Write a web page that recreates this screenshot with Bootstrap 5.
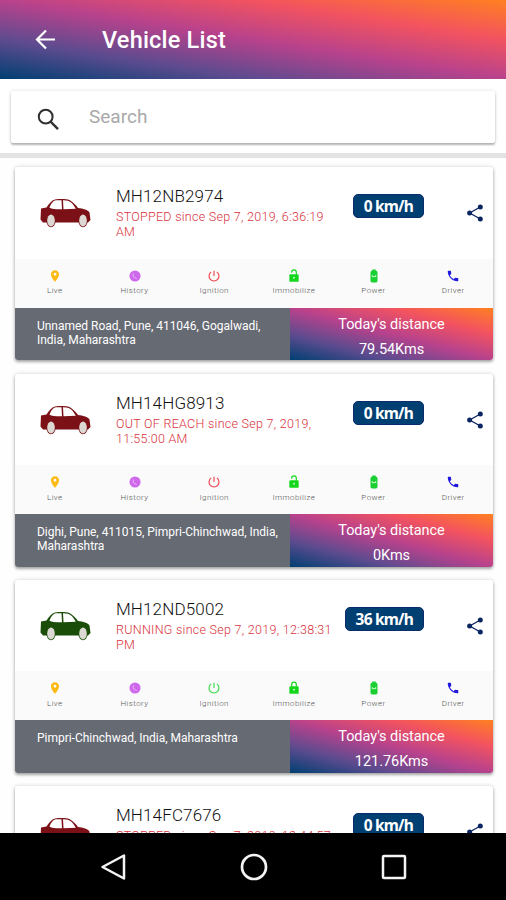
<!DOCTYPE html>
<html lang="en">
<head>
<meta charset="utf-8">
<meta name="viewport" content="width=device-width, initial-scale=1">
<title>Vehicle List</title>
<link rel="stylesheet" href="https://cdn.jsdelivr.net/npm/bootstrap@5.3.0/dist/css/bootstrap.min.css">
<style>
:root{--sunset:linear-gradient(to top right,#003f72,#5d4b8f 25%,#b8428c 50%,#f3535f 75%,#ff8020)}
body{font-family:Roboto,"Liberation Sans",sans-serif;height:900px;overflow:hidden;background:#fff}
.app-header{height:79px;background:var(--sunset);padding:0 35px}
.app-header h1{font-size:23.5px;font-weight:500;margin-left:46px;letter-spacing:.2px;line-height:28px}
.search-area{height:158px;flex:0 0 79px;padding:12px 11px 0;border-bottom:5px solid #e3e3e3}
.search-card{height:52px;border-radius:2px;box-shadow:0 2px 2px rgba(0,0,0,.26),0 0 4px rgba(0,0,0,.13);padding:0 25px}
.search-card input{font-size:19px;margin-left:29px;padding:0;border:0;outline:0;background:none;line-height:24px;height:24px}
.search-card input::placeholder{color:#a9a9a9;opacity:1}
.vehicle-list{padding:9.4px 13px 0 15px;gap:13.2px;background:#fefefe;min-height:0}
.vehicle{flex:0 0 193px;border-radius:3px;overflow:hidden;background:#fff;box-shadow:0 2px 3px rgba(0,0,0,.3),0 0 4px rgba(0,0,0,.16)}
.vehicle-top{height:91.6px;padding:0 10px 0 25px}
.car-icon{width:51px;height:30px;margin-top:31px;flex:none}
.vehicle-info{width:218px;flex:none;white-space:nowrap;margin-left:25px;padding-top:19px}
.plate{font-size:17px;line-height:21px;letter-spacing:.15px;color:#111;font-weight:300}
.since{font-size:12.5px;line-height:15px;color:#d8323c;letter-spacing:.28px;font-weight:300;margin-top:2px}
.speed{margin-top:27px;margin-left:auto;margin-right:43px;height:24px;padding:0 10px;border-radius:5px;background:#003f72;border:1px solid #0b2c6c;color:#fff;font:700 15.5px/22px "Noto Sans","Open Sans",sans-serif;letter-spacing:-.8px;white-space:nowrap}
.share-icon{width:16px;height:18px;margin-top:37px;flex:none}
.actions{height:49px;background:#fafafa}
.actions>div{flex:1 1 0;padding-top:10px}
.actions svg{width:14px;height:14px}
.actions span{font-size:8px;line-height:10px;margin-top:3.500px;color:#555;letter-spacing:.42px;font-weight:300}
.vehicle-foot{height:52.4px}
.address{width:275px;background:#666a73;color:#fff;padding:11px 0 0 22px;font-size:12px;line-height:14px;letter-spacing:-.02px;white-space:nowrap}
.distance{background:var(--sunset);font-size:14.5px;line-height:25px;padding-top:4px;letter-spacing:-.05px}
.system-nav{flex:0 0 67px;background:#000;padding-left:100px;padding-right:99px}
</style>
<script src="https://cdn.jsdelivr.net/npm/bootstrap@5.3.0/dist/js/bootstrap.bundle.min.js"></script>
</head>
<body class="d-flex flex-column">
<svg class="d-none" xmlns="http://www.w3.org/2000/svg">
  <symbol id="car" viewBox="0 0 51 30">
    <path fill="currentColor" d="M1 10.500 6.500 9.500C9 5.500 11.500 2.500 15 1.500 20 .8 26 .8 29.500 2 33 4 36 7 38 10 43 10.500 48 12 49.500 14.500L50.500 22 48 24.500H3L.5 21.500Z"/>
    <path fill="#fff" d="M9.500 9.800C10.800 6 13 2.600 16 2.300H21.500L22 11.300C18 11.500 12 11.300 9.500 9.800ZM23 2.200C30 2 33 5.500 35.800 10.800L23.500 11.300Z"/>
    <ellipse cx="11" cy="22.700" rx="4.600" ry="6.500" fill="currentColor"/><ellipse cx="11" cy="22.500" rx="3.800" ry="5.900" fill="#dcd8d4"/>
    <ellipse cx="43" cy="22.700" rx="4.600" ry="6.500" fill="currentColor"/><ellipse cx="43" cy="22.500" rx="3.800" ry="5.900" fill="#dcd8d4"/>
  </symbol>
  <symbol id="share" viewBox="0 0 16 18"><path d="M13.300 3 2.700 9l10.600 6" fill="none" stroke="#0b2560" stroke-width="1.300"/><g fill="#0b2560"><circle cx="13.300" cy="2.900" r="2.500"/><circle cx="2.600" cy="9" r="2.500"/><circle cx="13.300" cy="15.100" r="2.500"/></g></symbol>
  <symbol id="pin" viewBox="0 0 24 24"><path fill="#fcba12" d="M12 2C8.100 2 5 5.100 5 9c0 5.300 7 13 7 13s7-7.700 7-13c0-3.900-3.100-7-7-7zm0 9.500a2.500 2.500 0 1 1 0-5 2.500 2.500 0 0 1 0 5z"/></symbol>
  <symbol id="clock" viewBox="0 0 24 24"><circle cx="12" cy="12" r="9.500" fill="#cf69ec"/><path d="M9 7.500V13l6 3.500" fill="none" stroke="#fff" stroke-opacity=".5" stroke-width="1.600"/></symbol>
  <symbol id="power" viewBox="0 0 24 24"><path d="M12 3v9M7 5.200a8.500 8.500 0 1 0 10 0" fill="none" stroke="currentColor" stroke-width="2"/></symbol>
  <symbol id="unlock" viewBox="0 0 24 24"><path d="M8 6.500V5.500a4 4 0 0 1 8 0V10" fill="none" stroke="#14d61b" stroke-width="2"/><rect x="4" y="9" width="16" height="13" rx="2" fill="#14d61b"/><circle cx="12" cy="15" r="1.800" fill="#baf4bb"/></symbol>
  <symbol id="lock" viewBox="0 0 24 24"><path d="M8 10V6a4 4 0 0 1 8 0v4" fill="none" stroke="#14d61b" stroke-width="2"/><rect x="4" y="9" width="16" height="13" rx="2" fill="#14d61b"/><circle cx="12" cy="15" r="1.800" fill="#baf4bb"/></symbol>
  <symbol id="battery" viewBox="0 0 24 24"><path fill="#19cf31" d="M9 1h6v2h1.500L18 5v16l-2 2H8l-2-2V5l1.500-2H9z"/><path d="M9 14v-3l3 3 3-3v3" fill="none" stroke="#d8ffdc" stroke-width="1.600"/></symbol>
  <symbol id="phone" viewBox="0 0 24 24"><path fill="#2118df" d="M6.600 10.800c1.400 2.800 3.800 5.100 6.600 6.600l2.200-2.200c.3-.3.700-.4 1-.2 1.100.4 2.300.6 3.600.6.600 0 1 .4 1 1V20c0 .6-.4 1-1 1C10.600 21 3 13.400 3 4c0-.6.500-1 1-1h3.500c.6 0 1 .5 1 1 0 1.300.2 2.500.6 3.600.1.300 0 .7-.2 1z"/></symbol>
</svg>

<header class="app-header d-flex align-items-center flex-shrink-0 text-white">
  <svg width="21" height="21" viewBox="0 0 21 21" fill="none" stroke="#fff" stroke-width="2.200"><path d="M20 10.500H2.500M11 1.500l-9 9 9 9"/></svg>
  <h1 class="mb-0">Vehicle List</h1>
</header>
<section class="search-area">
  <div class="search-card d-flex align-items-center bg-white">
    <svg class="mt-1" width="24" height="24" viewBox="0 0 24 24" fill="none" stroke="#303030"><circle cx="9.700" cy="9.700" r="6.900" stroke-width="2"/><path d="m14.500 14.500 7.500 7.700" stroke-width="2.500"/></svg>
    <input type="text" placeholder="Search" aria-label="Search">
  </div>
</section>

<main class="vehicle-list d-flex flex-column flex-grow-1 overflow-hidden">
  <article class="vehicle">
    <div class="vehicle-top d-flex align-items-start">
      <svg class="car-icon" color="#7b1016"><use href="#car"/></svg>
      <div class="vehicle-info"><div class="plate">MH12NB2974</div><div class="since">STOPPED since Sep 7, 2019, 6:36:19<br>AM</div></div>
      <div class="speed">0 km/h</div>
      <svg class="share-icon"><use href="#share"/></svg>
    </div>
    <div class="actions d-flex text-center">
      <div><svg class="d-block mx-auto"><use href="#pin"/></svg><span class="d-block">Live</span></div>
      <div><svg class="d-block mx-auto"><use href="#clock"/></svg><span class="d-block">History</span></div>
      <div><svg class="d-block mx-auto" color="#ef4a50"><use href="#power"/></svg><span class="d-block">Ignition</span></div>
      <div><svg class="d-block mx-auto"><use href="#unlock"/></svg><span class="d-block">Immobilize</span></div>
      <div><svg class="d-block mx-auto"><use href="#battery"/></svg><span class="d-block">Power</span></div>
      <div><svg class="d-block mx-auto"><use href="#phone"/></svg><span class="d-block">Driver</span></div>
    </div>
    <div class="vehicle-foot d-flex">
      <div class="address flex-shrink-0">Unnamed Road, Pune, 411046, Gogalwadi,<br>India, Maharashtra</div>
      <div class="distance flex-grow-1 text-center text-white">Today's distance<div>79.54Kms</div></div>
    </div>
  </article>

  <article class="vehicle">
    <div class="vehicle-top d-flex align-items-start">
      <svg class="car-icon" color="#7b1016"><use href="#car"/></svg>
      <div class="vehicle-info"><div class="plate">MH14HG8913</div><div class="since">OUT OF REACH since Sep 7, 2019,<br>11:55:00 AM</div></div>
      <div class="speed">0 km/h</div>
      <svg class="share-icon"><use href="#share"/></svg>
    </div>
    <div class="actions d-flex text-center">
      <div><svg class="d-block mx-auto"><use href="#pin"/></svg><span class="d-block">Live</span></div>
      <div><svg class="d-block mx-auto"><use href="#clock"/></svg><span class="d-block">History</span></div>
      <div><svg class="d-block mx-auto" color="#ef4a50"><use href="#power"/></svg><span class="d-block">Ignition</span></div>
      <div><svg class="d-block mx-auto"><use href="#unlock"/></svg><span class="d-block">Immobilize</span></div>
      <div><svg class="d-block mx-auto"><use href="#battery"/></svg><span class="d-block">Power</span></div>
      <div><svg class="d-block mx-auto"><use href="#phone"/></svg><span class="d-block">Driver</span></div>
    </div>
    <div class="vehicle-foot d-flex">
      <div class="address flex-shrink-0">Dighi, Pune, 411015, Pimpri-Chinchwad, India,<br>Maharashtra</div>
      <div class="distance flex-grow-1 text-center text-white">Today's distance<div>0Kms</div></div>
    </div>
  </article>

  <article class="vehicle">
    <div class="vehicle-top d-flex align-items-start">
      <svg class="car-icon" color="#1a4e08"><use href="#car"/></svg>
      <div class="vehicle-info"><div class="plate">MH12ND5002</div><div class="since">RUNNING since Sep 7, 2019, 12:38:31<br>PM</div></div>
      <div class="speed">36 km/h</div>
      <svg class="share-icon"><use href="#share"/></svg>
    </div>
    <div class="actions d-flex text-center">
      <div><svg class="d-block mx-auto"><use href="#pin"/></svg><span class="d-block">Live</span></div>
      <div><svg class="d-block mx-auto"><use href="#clock"/></svg><span class="d-block">History</span></div>
      <div><svg class="d-block mx-auto" color="#3bdc4b"><use href="#power"/></svg><span class="d-block">Ignition</span></div>
      <div><svg class="d-block mx-auto"><use href="#lock"/></svg><span class="d-block">Immobilize</span></div>
      <div><svg class="d-block mx-auto"><use href="#battery"/></svg><span class="d-block">Power</span></div>
      <div><svg class="d-block mx-auto"><use href="#phone"/></svg><span class="d-block">Driver</span></div>
    </div>
    <div class="vehicle-foot d-flex">
      <div class="address flex-shrink-0">Pimpri-Chinchwad, India, Maharashtra</div>
      <div class="distance flex-grow-1 text-center text-white">Today's distance<div>121.76Kms</div></div>
    </div>
  </article>

  <article class="vehicle">
    <div class="vehicle-top d-flex align-items-start">
      <svg class="car-icon" color="#7b1016"><use href="#car"/></svg>
      <div class="vehicle-info"><div class="plate">MH14FC7676</div><div class="since">STOPPED since Sep 7, 2019, 12:44:57</div></div>
      <div class="speed">0 km/h</div>
      <svg class="share-icon"><use href="#share"/></svg>
    </div>
  </article>
</main>

<nav class="system-nav d-flex align-items-center justify-content-between">
  <svg width="27" height="28" viewBox="0 0 27 28" fill="none" stroke="#f4f4f4" stroke-width="2.500" stroke-linejoin="round"><path d="M24 2.500v23L2.500 14z"/></svg>
  <svg width="28" height="28" viewBox="0 0 28 28" fill="none" stroke="#f4f4f4" stroke-width="2.700"><circle cx="14" cy="14" r="12"/></svg>
  <svg width="26" height="26" viewBox="0 0 26 26" fill="none" stroke="#f4f4f4" stroke-width="2.500"><rect x="2" y="2" width="22" height="22" rx="1"/></svg>
</nav>
</body>
</html>
